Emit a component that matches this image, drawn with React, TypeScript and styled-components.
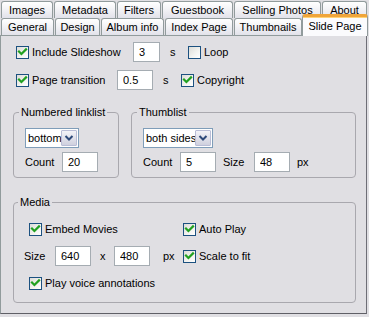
import React from "react";
import styled, { createGlobalStyle } from "styled-components";

const Global = createGlobalStyle`
  html, body { margin: 0; padding: 0; background: #e0dfe3; }
  body {
    font-family: "Liberation Sans", Arial, sans-serif;
    font-size: 11px;
    color: #000;
  }
`;

const Window = styled.div`
  width: 369px;
  height: 317px;
  box-sizing: border-box;
  padding-top: 1px;
  background: #e0dfe3;
  overflow: hidden;
`;

const TabRow = styled.div<{ $front?: boolean }>`
  display: flex;
  align-items: flex-end;
  gap: 1px;
  height: 17px;
  padding-left: 1px;
  position: relative;
  z-index: ${(p) => (p.$front ? 3 : 1)};
`;

const Tab = styled.div<{ $w: number; $active?: boolean }>`
  box-sizing: border-box;
  flex: 0 0 auto;
  width: ${(p) => p.$w}px;
  height: ${(p) => (p.$active ? 22 : 17)}px;
  margin-bottom: ${(p) => (p.$active ? -1 : 0)}px;
  margin-left: ${(p) => (p.$active ? -1 : 0)}px;
  border: 1px solid #919b9c;
  border-bottom: none;
  border-radius: 3px 3px 0 0;
  background: ${(p) =>
    p.$active
      ? "#fbfbfd"
      : "linear-gradient(#ffffff 0%, #f3f3f6 45%, #e2e2ea 100%)"};
  ${(p) =>
    p.$active &&
    "border-top: 3px solid #f0a53a; box-shadow: inset 0 1px 0 #ffd276;"}
  display: flex;
  align-items: center;
  justify-content: center;
  white-space: nowrap;
  padding-top: ${(p) => (p.$active ? 0 : 1)}px;
  line-height: 13px;
`;

const Panel = styled.div`
  position: relative;
  z-index: 2;
  box-sizing: border-box;
  width: 367px;
  height: 279px;
  border: 1px solid #919b9c;
  border-right-color: #6e6e76;
  border-bottom-color: #5f5f66;
  background: #e0dfe3;
  padding: 6px 0 0 12px;
  display: flex;
  flex-direction: column;
`;

const Row = styled.div<{ $mt?: number; $ml?: number }>`
  display: flex;
  align-items: center;
  height: 20px;
  margin-top: ${(p) => p.$mt ?? 0}px;
  margin-left: ${(p) => p.$ml ?? 0}px;
`;

const Cell = styled.span<{ $w?: number; $pl?: number }>`
  flex: 0 0 auto;
  box-sizing: border-box;
  ${(p) => (p.$w ? `width: ${p.$w}px;` : "")}
  padding-left: ${(p) => p.$pl ?? 0}px;
  white-space: nowrap;
`;

const CheckWrap = styled.label<{ $w?: number; $ml?: number }>`
  flex: 0 0 auto;
  display: inline-flex;
  align-items: center;
  gap: 3px;
  ${(p) => (p.$w ? `width: ${p.$w}px;` : "")}
  margin-left: ${(p) => p.$ml ?? 0}px;
  white-space: nowrap;
`;

const Box = styled.span`
  box-sizing: border-box;
  width: 13px;
  height: 13px;
  border: 1px solid #1c5180;
  background: linear-gradient(135deg, #dcdcd7 0%, #f2f2ef 55%, #ffffff 100%);
  display: inline-flex;
  align-items: center;
  justify-content: center;
`;

const Check = ({ checked, children, w, ml }: { checked?: boolean; children: React.ReactNode; w?: number; ml?: number }) => (
  <CheckWrap $w={w} $ml={ml}>
    <Box>
      {checked && (
        <svg width="11" height="11" viewBox="0 0 11 11">
          <path d="M2 4.6 L4.4 7 L9 2.4" fill="none" stroke="#21a121" strokeWidth="2.2" strokeLinecap="square" />
        </svg>
      )}
    </Box>
    <span>{children}</span>
  </CheckWrap>
);

const Edit = styled.input<{ $w: number }>`
  flex: 0 0 auto;
  box-sizing: border-box;
  width: ${(p) => p.$w}px;
  height: 20px;
  margin: 0;
  border: 1px solid #a5acb2;
  background: #fff;
  padding: 0 0 0 5px;
  font: inherit;
  font-size: 11px;
  color: #000;
  outline: none;
`;

const Combo = styled.div<{ $w: number }>`
  box-sizing: border-box;
  width: ${(p) => p.$w}px;
  height: 20px;
  border: 1px solid #7f9db9;
  background: #fff;
  display: flex;
  align-items: center;
  padding: 1px;
  font-size: 11px;
  white-space: nowrap;
`;

const ComboText = styled.span`
  flex: 1 1 auto;
  min-width: 0;
  overflow: hidden;
  padding-left: 1px;
`;

const ComboButton = styled.span`
  flex: 0 0 auto;
  box-sizing: border-box;
  width: 16px;
  height: 16px;
  border: 1px solid #b9bdd6;
  border-radius: 1px;
  background: linear-gradient(#f3f3f8, #cfd0de);
  display: inline-flex;
  align-items: center;
  justify-content: center;
`;

const Select = ({ value, w }: { value: string; w: number }) => (
  <Combo $w={w}>
    <ComboText>{value}</ComboText>
    <ComboButton>
      <svg width="10" height="8" viewBox="0 0 10 8">
        <path d="M1.5 2 L5 5.5 L8.5 2" fill="none" stroke="#2e4a7a" strokeWidth="2" />
      </svg>
    </ComboButton>
  </Combo>
);

const GroupRow = styled.div`
  display: flex;
  gap: 12px;
  margin-top: 15px;
`;

const Group = styled.fieldset<{ $w: number; $pb: number; $pl: number }>`
  box-sizing: border-box;
  width: ${(p) => p.$w}px;
  margin: 0;
  border: 1px solid #a9a8ae;
  border-radius: 4px;
  padding: 0 0 ${(p) => p.$pb}px ${(p) => p.$pl}px;
  min-width: 0;
`;

const Legend = styled.legend`
  margin-left: -6px;
  padding: 0 2px;
  line-height: 14px;
  white-space: nowrap;
`;

const GroupBody = styled.div<{ $pt: number; $gap: number }>`
  display: flex;
  flex-direction: column;
  padding-top: ${(p) => p.$pt}px;
  gap: ${(p) => p.$gap}px;
`;

const MediaGroup = styled(Group)`
  margin-top: 17px;
`;

const MediaGrid = styled.div`
  display: grid;
  grid-template-columns: 159px auto;
  grid-auto-rows: 20px;
  row-gap: 7px;
  padding-top: 10px;
  align-items: center;
`;

export default function App() {
  return (
    <Window>
      <Global />
      <TabRow>
        <Tab $w={52}>Images</Tab>
        <Tab $w={62}>Metadata</Tab>
        <Tab $w={44}>Filters</Tab>
        <Tab $w={71}>Guestbook</Tab>
        <Tab $w={87}>Selling Photos</Tab>
        <Tab $w={45}>About</Tab>
      </TabRow>
      <TabRow $front>
        <Tab $w={53}>General</Tab>
        <Tab $w={45}>Design</Tab>
        <Tab $w={63}>Album info</Tab>
        <Tab $w={68}>Index Page</Tab>
        <Tab $w={68}>Thumbnails</Tab>
        <Tab $w={66} $active>Slide Page</Tab>
      </TabRow>
      <Panel>
        <Row $ml={3}>
          <Check checked w={117}>Include Slideshow</Check>
          <Edit $w={27} readOnly value="3" />
          <Cell $w={28} $pl={10}>s</Cell>
          <Check>Loop</Check>
        </Row>
        <Row $ml={3} $mt={8}>
          <Check checked w={101}>Page transition</Check>
          <Edit $w={36} readOnly value="0.5" />
          <Cell $w={28} $pl={10}>s</Cell>
          <Check checked>Copyright</Check>
        </Row>
        <GroupRow>
          <Group $w={106} $pb={5} $pl={11}>
            <Legend>Numbered linklist</Legend>
            <GroupBody $pt={9} $gap={4}>
              <Row>
                <Select value="bottom" w={54} />
              </Row>
              <Row>
                <Cell $w={37}>Count</Cell>
                <Edit $w={36} readOnly value="20" />
              </Row>
            </GroupBody>
          </Group>
          <Group $w={225} $pb={5} $pl={11}>
            <Legend>Thumblist</Legend>
            <GroupBody $pt={9} $gap={4}>
              <Row>
                <Select value="both sides" w={70} />
              </Row>
              <Row>
                <Cell $w={37}>Count</Cell>
                <Edit $w={36} readOnly value="5" />
                <Cell $w={38} $pl={7}>Size</Cell>
                <Edit $w={36} readOnly value="48" />
                <Cell $pl={7}>px</Cell>
              </Row>
            </GroupBody>
          </Group>
        </GroupRow>
        <MediaGroup $w={343} $pb={9} $pl={10}>
          <Legend>Media</Legend>
          <MediaGrid>
            <Check checked ml={5}>Embed Movies</Check>
            <Check checked>Auto Play</Check>
            <Row>
              <Cell $w={31}>Size</Cell>
              <Edit $w={36} readOnly value="640" />
              <Cell $w={23} $pl={9}>x</Cell>
              <Edit $w={36} readOnly value="480" />
              <Cell $pl={13}>px</Cell>
            </Row>
            <Check checked>Scale to fit</Check>
            <Check checked ml={5}>Play voice annotations</Check>
          </MediaGrid>
        </MediaGroup>
      </Panel>
    </Window>
  );
}
